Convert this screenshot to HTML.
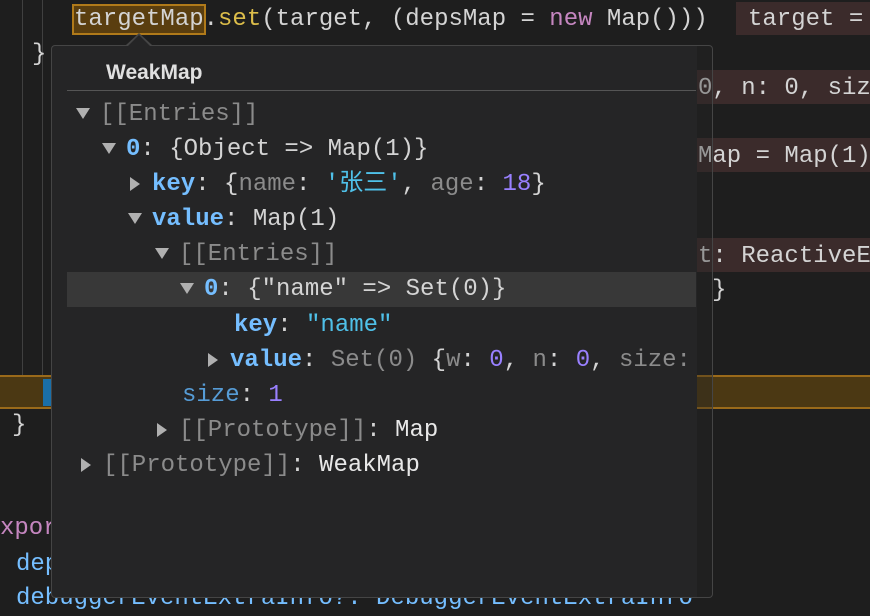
<!DOCTYPE html>
<html><head><meta charset="utf-8"><style>
*{margin:0;padding:0;box-sizing:border-box}
body{width:870px;height:616px;background:#1e1e1e;overflow:hidden;position:relative;font-family:"Liberation Mono","Noto Sans CJK SC",monospace;font-size:24px;color:#d4d4d4}
.l{position:absolute;white-space:pre;line-height:34px;height:34px}
.g{color:#8b8b8b}.b{color:#75beff;font-weight:bold}.bl{color:#569cd6}.n{color:#9980ff}.s{color:#4fc1e9}.w{color:#e8e8e8}
.tri{display:inline-block;width:0;height:0;vertical-align:middle}
.down{border-left:7px solid transparent;border-right:7px solid transparent;border-top:11px solid #b0b0b0;margin-right:10px}
.right{border-top:7px solid transparent;border-bottom:7px solid transparent;border-left:10px solid #b0b0b0;margin-right:12px}
.guide{position:absolute;width:1px;background:#404040}
</style></head><body>
<div class="guide" style="left:42px;top:0;height:375px"></div>
<div class="guide" style="left:22px;top:0;height:375px"></div>
<div class="l" style="top:3px;left:74px"><span style="background:#5a3e0f;outline:2px solid #b07a1a">targetMap</span>.<span style="color:#dcbd4a">set</span>(target, (depsMap = <span style="color:#c586c0">new</span> Map()))</div>
<div style="position:absolute;left:736px;top:2px;width:140px;height:33px;background:#3b2b2b"></div>
<div class="l" style="left:748px;top:3px">target =</div>
<div class="l" style="left:32px;top:38px">}</div>
<div style="position:absolute;left:696px;top:70px;width:180px;height:34px;background:#3b2b2b"></div>
<div class="l" style="left:698px;top:72px">0, n: 0, siz</div>
<div style="position:absolute;left:696px;top:138px;width:180px;height:34px;background:#3b2b2b"></div>
<div class="l" style="left:698px;top:140px">Map = Map(1)</div>
<div style="position:absolute;left:696px;top:238px;width:180px;height:34px;background:#3b2b2b"></div>
<div class="l" style="left:698px;top:240px">t: ReactiveE</div>
<div class="l" style="left:712px;top:274px">}</div>
<div style="position:absolute;left:0;top:375px;width:870px;height:34px;background:#4b3813;border-top:2px solid #9a6a1a;border-bottom:2px solid #9a6a1a"></div>
<div style="position:absolute;left:43px;top:379px;width:10px;height:27px;background:#1a6fa8"></div>
<div class="l" style="left:12px;top:409px">}</div>
<div class="l" style="left:0;top:512px;color:#c586c0">xport</div>
<div class="l" style="left:16px;top:548px;color:#75beff">deps</div>
<div class="l" style="left:16px;top:582px;color:#75beff">debuggerEventExtraInfo?: DebuggerEventExtraInfo</div>

<div style="position:absolute;left:51px;top:45px;width:646px;height:553px;background:#252526;border:1px solid #454545;border-right:none;border-radius:4px 0 0 4px;"></div>
<div style="position:absolute;left:697px;top:45px;width:16px;height:553px;border:1px solid #454545;border-left:none;border-radius:0 4px 4px 0;background:rgba(37,37,38,0.35)"></div>
<div style="position:absolute;left:126px;top:33px;width:0;height:0;border-left:13px solid transparent;border-right:13px solid transparent;border-bottom:12px solid #454545"></div>
<div style="position:absolute;left:128px;top:35px;width:0;height:0;border-left:11px solid transparent;border-right:11px solid transparent;border-bottom:11px solid #252526"></div>
<div style="position:absolute;left:106px;top:61px;font-family:'Liberation Sans',sans-serif;font-weight:bold;font-size:21px;color:#e0e0e0">WeakMap</div>
<div style="position:absolute;left:67px;top:90px;width:629px;height:1px;background:#555"></div>
<div style="position:absolute;left:67px;top:272px;width:629px;height:35px;background:#383838"></div>

<div class="l" style="left:76px;top:98px"><span class="tri down"></span><span class="g">[[Entries]]</span></div>
<div class="l" style="left:102px;top:133px"><span class="tri down"></span><span class="b">0</span>: {Object =&gt; Map(1)}</div>
<div class="l" style="left:130px;top:168px"><span class="tri right"></span><span class="b">key</span>: {<span class="g">name</span>: <span class="s">'张三'</span>, <span class="g">age</span>: <span class="n">18</span>}</div>
<div class="l" style="left:128px;top:203px"><span class="tri down"></span><span class="b">value</span>: Map(1)</div>
<div class="l" style="left:155px;top:238px"><span class="tri down"></span><span class="g">[[Entries]]</span></div>
<div class="l" style="left:180px;top:273px"><span class="tri down"></span><span class="b">0</span>: {"name" =&gt; Set(0)}</div>
<div class="l" style="left:234px;top:309px"><span class="b">key</span>: <span class="s">"name"</span></div>
<div class="l" style="left:208px;top:344px"><span class="tri right"></span><span class="b">value</span>: <span class="g">Set(0)</span> {<span class="g">w</span>: <span class="n">0</span>, <span class="g">n</span>: <span class="n">0</span>, <span class="g">size:</span></div>
<div class="l" style="left:182px;top:379px"><span class="bl">size</span>: <span class="n">1</span></div>
<div class="l" style="left:157px;top:414px"><span class="tri right"></span><span class="g">[[Prototype]]</span>: <span class="w">Map</span></div>
<div class="l" style="left:81px;top:449px"><span class="tri right"></span><span class="g">[[Prototype]]</span>: <span class="w">WeakMap</span></div>
</body></html>
